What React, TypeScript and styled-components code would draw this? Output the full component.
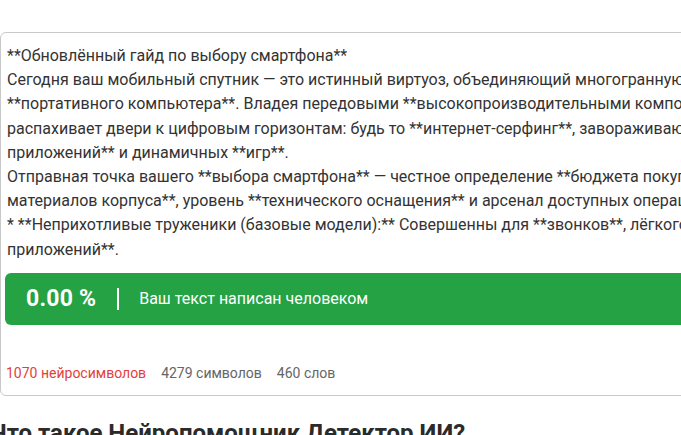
import styled, { createGlobalStyle } from 'styled-components'

const GlobalStyle = createGlobalStyle`
  html, body {
    margin: 0;
    padding: 0;
    background: #fff;
    overflow: hidden;
  }
  body {
    font-family: Roboto, "Liberation Sans", Arial, sans-serif;
    color: #333;
  }
`

const Page = styled.div`
  width: 681px;
  height: 435px;
  padding-top: 32px;
  box-sizing: border-box;
  overflow: hidden;
`

const Card = styled.div`
  width: 1100px;
  border: 1px solid #c9c9c9;
  border-radius: 6px;
  padding: 0 4px;
  box-sizing: border-box;
`

const TextBody = styled.div`
  padding: 11px 2px 0;
  font-size: 16px;
  line-height: 24.2px;
  color: #333;
  white-space: nowrap;
`

const ResultBar = styled.div`
  margin-top: 11px;
  height: 52px;
  background: #24a244;
  border-radius: 6px;
  display: flex;
  align-items: center;
  padding-left: 21px;
  color: #fff;
`

const Percent = styled.span`
  font-size: 23px;
  font-weight: 700;
  letter-spacing: 0.2px;
`

const Divider = styled.span`
  width: 2px;
  height: 22px;
  background: #fff;
  margin: 0 20px 0 21px;
`

const Verdict = styled.span`
  font-size: 16px;
`

const Stats = styled.div`
  display: flex;
  gap: 15px;
  padding: 38px 1px 12px;
  font-size: 14px;
  line-height: 20px;
`

const Stat = styled.span<{ $accent?: boolean }>`
  color: ${(p) => (p.$accent ? '#e2413b' : '#666')};
`

const Heading = styled.h2`
  margin: 23px 0 0 -10px;
  font-size: 24px;
  font-weight: 700;
  color: #2b2b2b;
  white-space: nowrap;
`

const lines = [
  '**Обновлённый гайд по выбору смартфона**',
  'Сегодня ваш мобильный спутник — это истинный виртуоз, объединяющий многогранную функциональность',
  '**портативного компьютера**. Владея передовыми **высокопроизводительными компонентами**, смартфон',
  'распахивает двери к цифровым горизонтам: будь то **интернет-серфинг**, завораживающий мир',
  'приложений** и динамичных **игр**.',
  'Отправная точка вашего **выбора смартфона** — честное определение **бюджета покупки**, предпочтений',
  'материалов корпуса**, уровень **технического оснащения** и арсенал доступных операционных систем.',
  '* **Неприхотливые труженики (базовые модели):** Совершенны для **звонков**, лёгкого серфинга и',
  'приложений**.',
]

const App = () => (
  <Page>
    <GlobalStyle />
    <Card>
      <TextBody>
        {lines.map((l, i) => (
          <div key={i}>{l}</div>
        ))}
      </TextBody>
      <ResultBar>
        <Percent>0.00 %</Percent>
        <Divider />
        <Verdict>Ваш текст написан человеком</Verdict>
      </ResultBar>
      <Stats>
        <Stat $accent>1070 нейросимволов</Stat>
        <Stat>4279 символов</Stat>
        <Stat>460 слов</Stat>
      </Stats>
    </Card>
    <Heading>Что такое Нейропомощник Детектор ИИ?</Heading>
  </Page>
)

export default App
